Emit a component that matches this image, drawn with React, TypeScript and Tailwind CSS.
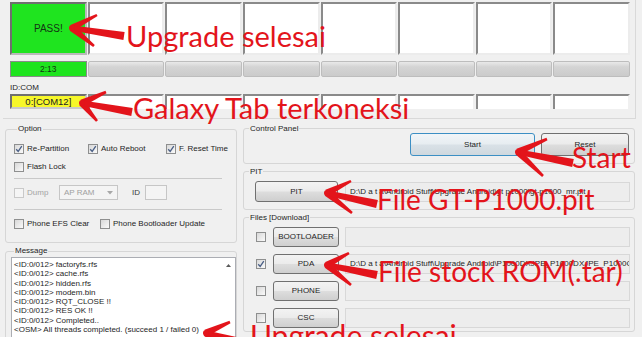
import React from "react";

const RED = "#e3141b";

function Check() {
  return (
    <svg width="8" height="8" viewBox="0 0 8 8">
      <path d="M1.2 4.2 L3.2 6.4 L6.8 1.2" fill="none" stroke="#4a5f86" strokeWidth="1.3" />
    </svg>
  );
}

function Box({ checked = false, disabled = false }: { checked?: boolean; disabled?: boolean }) {
  return (
    <span
      className={
        disabled
          ? "inline-flex shrink-0 items-center justify-center w-[10px] h-[10px] border border-[#c9c9c9] bg-[#f5f5f5]"
          : "inline-flex shrink-0 items-center justify-center w-[10px] h-[10px] border border-[#8e8f8f] bg-[linear-gradient(135deg,#d8d8d8,#fafafa)]"
      }
    >
      {checked && <Check />}
    </span>
  );
}

function CheckItem({ label, checked, disabled, w }: { label: string; checked?: boolean; disabled?: boolean; w?: string }) {
  return (
    <div className={"flex items-center gap-[3px] " + (w ?? "")}>
      <Box checked={checked} disabled={disabled} />
      <span className={disabled ? "text-[#a3a3a3]" : "text-[#1e1e1e]"}>{label}</span>
    </div>
  );
}

function Btn({ label, cls }: { label: string; cls: string }) {
  return (
    <div
      className={
        "flex items-center justify-center rounded-[3px] border border-[#707070] bg-[linear-gradient(#f3f3f3_0%,#ebebeb_48%,#dddddd_52%,#cfcfcf_100%)] text-[#1e1e1e] " +
        cls
      }
    >
      {label}
    </div>
  );
}

function Field({ text }: { text?: string }) {
  return (
    <div className="flex items-center w-[285px] h-[20px] border border-[#d8d8d8] bg-[#ededed] pl-[4px] overflow-hidden whitespace-nowrap text-[#1e1e1e]">
      {text}
    </div>
  );
}

function taper(p0: number[], p1: number[], w0: number, w1: number) {
  const dx = p1[0] - p0[0];
  const dy = p1[1] - p0[1];
  const len = Math.hypot(dx, dy);
  const nx = -dy / len;
  const ny = dx / len;
  const pts = [
    [p0[0] + (nx * w0) / 2, p0[1] + (ny * w0) / 2],
    [p1[0] + (nx * w1) / 2, p1[1] + (ny * w1) / 2],
    [p1[0] - (nx * w1) / 2, p1[1] - (ny * w1) / 2],
    [p0[0] - (nx * w0) / 2, p0[1] - (ny * w0) / 2],
  ];
  return pts.map((p) => p.join(",")).join(" ");
}

function Arrow({ tip, a, b, tail }: { tip: number[]; a: number[]; b: number[]; tail: number[] }) {
  return (
    <g fill={RED}>
      <polygon points={taper(tip, a, 7, 2.5)} />
      <polygon points={taper(tip, b, 7, 2.5)} />
      <polygon points={taper(tip, tail, 5, 8)} />
      <circle cx={tip[0]} cy={tip[1]} r={3} />
    </g>
  );
}

const messages = [
  "<ID:0/012> factoryfs.rfs",
  "<ID:0/012> cache.rfs",
  "<ID:0/012> hidden.rfs",
  "<ID:0/012> modem.bin",
  "<ID:0/012> RQT_CLOSE !!",
  "<ID:0/012> RES OK !!",
  "<ID:0/012> Completed..",
  "<OSM> All threads completed. (succeed 1 / failed 0)",
];

const cols = [0, 1, 2, 3, 4, 5, 6, 7];

export default function App() {
  return (
    <div className="relative w-[642px] h-[337px] overflow-hidden bg-[#f0f0f0] text-[#1e1e1e] font-['Liberation_Sans',Arial,sans-serif] text-[8px] leading-none">
      {/* top status area */}
      <div className="h-[119px] ml-[3px] mr-[6px] border-r border-b border-[#d9d9d9] pl-[7px] pt-[2px]">
        <div className="grid grid-cols-8 gap-x-[1px] w-[620px]">
          {cols.map((i) => (
            <div
              key={i}
              className={
                i === 0
                  ? "flex items-center justify-center h-[53px] border-2 border-t-[#6f6f6f] border-l-[#6f6f6f] border-r-[#b9b9b9] border-b-[#b9b9b9] bg-[#1fe41f] text-[10px] text-[#143414]"
                  : "h-[53px] border-2 border-t-[#8a8a8a] border-l-[#8a8a8a] border-r-[#ececec] border-b-[#ececec] bg-white"
              }
            >
              {i === 0 ? "PASS!" : null}
            </div>
          ))}
        </div>
        <div className="grid grid-cols-8 gap-x-[1px] w-[620px] mt-[6px]">
          {cols.map((i) => (
            <div
              key={i}
              className={
                i === 0
                  ? "flex items-center justify-center h-[16px] border border-[#8a8a8a] bg-[#1fe41f] text-[8.5px] text-[#143414]"
                  : "h-[16px] rounded-[2px] border border-[#bdbdbd] bg-[linear-gradient(#e9e9e9_0%,#d4d4d4_35%,#cbcbcb_100%)]"
              }
            >
              {i === 0 ? "2:13" : null}
            </div>
          ))}
        </div>
        <div className="mt-[7px] h-[8px] text-[#1e1e1e]">ID:COM</div>
        <div className="grid grid-cols-8 gap-x-[1px] w-[620px] mt-[2px]">
          {cols.map((i) => (
            <div
              key={i}
              className={
                i === 0
                  ? "flex items-center justify-center h-[15px] border-2 border-t-[#6f6f6f] border-l-[#6f6f6f] border-r-[#c9c9c9] border-b-[#c9c9c9] bg-[#f7f72a] text-[9.5px] text-[#222]"
                  : "h-[15px] border-2 border-b-0 border-t-[#8a8a8a] border-l-[#8a8a8a] border-r-[#f0f0f0] bg-white"
              }
            >
              {i === 0 ? "0:[COM12]" : null}
            </div>
          ))}
        </div>
      </div>

      {/* bottom area */}
      <div className="flex mt-[5px]">
        {/* left column */}
        <div className="ml-[5px] w-[232px] flex flex-col">
          <fieldset className="h-[119px] border border-[#d6d6d6] rounded-[3px] pl-[8px]">
            <legend className="ml-[3px] px-[1px] leading-[10px]">Option</legend>
            <div className="flex mt-[10px]">
              <CheckItem label="Re-Partition" checked w="w-[74px]" />
              <CheckItem label="Auto Reboot" checked w="w-[78px]" />
              <CheckItem label="F. Reset Time" checked />
            </div>
            <div className="flex mt-[8px]">
              <CheckItem label="Flash Lock" />
            </div>
            <div className="mt-[6px] w-[208px] border-t border-[#c9c9c9]" />
            <div className="flex items-center mt-[6px] h-[15px]">
              <CheckItem label="Dump" disabled w="w-[45px]" />
              <div className="flex items-center justify-between w-[59px] h-[15px] border border-[#c6c6c6] bg-[#f4f4f4] px-[4px] text-[#a0a0a0]">
                <span>AP RAM</span>
                <svg width="6" height="4" viewBox="0 0 6 4">
                  <path d="M0 0 L6 0 L3 3.5 Z" fill="#a8a8a8" />
                </svg>
              </div>
              <span className="ml-[14px] text-[#3a3a3a]">ID</span>
              <div className="ml-[5px] w-[22px] h-[15px] border border-[#c6c6c6] bg-[#f4f4f4]" />
            </div>
            <div className="mt-[9px] w-[208px] border-t border-[#c9c9c9]" />
            <div className="flex mt-[9px]">
              <CheckItem label="Phone EFS Clear" w="w-[86px]" />
              <CheckItem label="Phone Bootloader Update" />
            </div>
          </fieldset>
          <fieldset className="mt-[3px] h-[120px] border border-[#d6d6d6] rounded-[3px] pl-[5px]">
            <legend className="ml-[3px] px-[1px] leading-[10px]">Message</legend>
            <div className="flex mt-[1px] h-[110px] border border-[#abadb3] bg-white">
              <div className="flex-1 pl-[2px] pt-[2px] leading-[9.3px] whitespace-nowrap text-[#1e1e1e]">
                {messages.map((m) => (
                  <div key={m}>{m}</div>
                ))}
              </div>
              <div className="w-[14px] flex justify-center pt-[6px]">
                <svg width="5" height="3" viewBox="0 0 5 3">
                  <path d="M0 3 L2.5 0 L5 3 Z" fill="#5a5a5a" />
                </svg>
              </div>
            </div>
          </fieldset>
        </div>

        {/* right column */}
        <div className="ml-[6px] w-[392px] flex flex-col">
          <fieldset className="h-[40px] border border-[#d6d6d6] rounded-[3px]">
            <legend className="ml-[5px] px-[1px] leading-[9px]">Control Panel</legend>
            <div className="flex justify-end gap-[6px] pr-[5px]">
              <div className="flex items-center justify-center w-[125px] h-[23px] rounded-[3px] border border-[#3c8fc4] bg-[linear-gradient(#f1f5f8_0%,#e7edf1_48%,#d9e1e7_52%,#cfd8de_100%)] text-[#1e1e1e]">
                Start
              </div>
              <Btn label="Reset" cls="w-[88px] h-[23px]" />
            </div>
          </fieldset>
          <fieldset className="mt-[3px] h-[43px] border border-[#d6d6d6] rounded-[3px] pl-[11px]">
            <legend className="ml-[-6px] px-[1px] leading-[9px]">PIT</legend>
            <div className="flex items-center gap-[7px] mt-[5px]">
              <Btn label="PIT" cls="w-[83px] h-[21px]" />
              <Field text="D:\D a t a\Android Stuff\Upgrade Android\gt p1000\gt-p1000_mr.pit" />
            </div>
          </fieldset>
          <fieldset className="mt-[3px] h-[119px] border border-[#d6d6d6] rounded-[3px] pl-[12px]">
            <legend className="ml-[-7px] px-[1px] leading-[9px]">Files [Download]</legend>
            <div className="flex flex-col gap-[7px] mt-[5px]">
              {[
                ["BOOTLOADER", false, ""],
                ["PDA", true, "D:\\D a t a\\Android Stuff\\Upgrade Android\\P1000DXJPE_P1000DXJPE_P1000OL"],
                ["PHONE", false, ""],
                ["CSC", false, ""],
              ].map(([label, checked, path]) => (
                <div key={label as string} className="flex items-center">
                  <Box checked={checked as boolean} />
                  <Btn label={label as string} cls="ml-[7px] w-[66px] h-[20px]" />
                  <div className="ml-[6px]">
                    <Field text={path as string} />
                  </div>
                </div>
              ))}
            </div>
          </fieldset>
        </div>
      </div>

      {/* red annotations */}
      <div className="absolute inset-0 pointer-events-none">
        <svg className="absolute left-0 top-0" width="642" height="337" viewBox="0 0 642 337">
          <Arrow tip={[72, 28]} a={[97, 15]} b={[94, 46]} tail={[124, 36]} />
          <Arrow tip={[82, 103]} a={[106, 92]} b={[97, 121]} tail={[132, 112]} />
          <Arrow tip={[518, 152]} a={[547, 139]} b={[543, 176]} tail={[573, 163]} />
          <Arrow tip={[327, 193]} a={[351, 181]} b={[352, 213]} tail={[377, 204]} />
          <Arrow tip={[327, 265]} a={[349, 253]} b={[351, 285]} tail={[377, 275]} />
          <Arrow tip={[206, 333]} a={[230, 322]} b={[228, 352]} tail={[250, 344]} />
        </svg>
        <div className="absolute left-[126px] top-[21px] whitespace-nowrap font-['Lato',sans-serif] text-[29px] leading-none text-[#e3141b]">
          Upgrade selesai
        </div>
        <div className="absolute left-[133px] top-[93px] whitespace-nowrap font-['Lato',sans-serif] text-[29px] leading-none text-[#e3141b]">
          Galaxy Tab terkoneksi
        </div>
        <div className="absolute left-[572px] top-[143px] whitespace-nowrap font-['Lato',sans-serif] text-[28px] leading-none text-[#e3141b]">
          Start
        </div>
        <div className="absolute left-[377px] top-[185px] whitespace-nowrap font-['Lato',sans-serif] text-[28px] leading-none text-[#e3141b]">
          File GT-P1000.pit
        </div>
        <div className="absolute left-[378px] top-[257px] whitespace-nowrap font-['Lato',sans-serif] text-[28px] leading-none text-[#e3141b]">
          File stock ROM(.tar)
        </div>
        <div className="absolute left-[250px] top-[320px] whitespace-nowrap font-['Lato',sans-serif] text-[30px] leading-none text-[#e3141b]">
          Upgrade selesai
        </div>
      </div>
    </div>
  );
}
